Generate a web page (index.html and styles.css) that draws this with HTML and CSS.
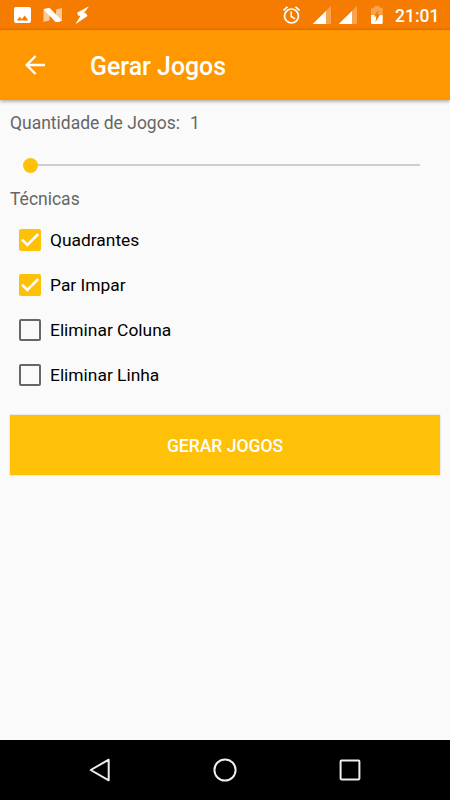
FILE: index.html
```
<!DOCTYPE html>
<html lang="pt-BR">
    <head>
        <meta charset="utf-8">
        <title>Gerar Jogos</title>
        <meta name="viewport" content="width=device-width, initial-scale=1" />
        <link rel="stylesheet" href="styles.css">
    </head>
    <body>
        <div class="screen">

            <div class="status">
                <svg class="status__left" width="100" height="30" viewBox="0 0 100 30">
                    <path fill="#fff" fill-rule="evenodd" d="M16 7h13a2 2 0 0 1 2 2v12a2 2 0 0 1-2 2h-13a2 2 0 0 1-2-2v-12a2 2 0 0 1 2-2zM16.600 20.500h11.800l-3.700-5-2.900 3.700-2-2.500z"/>
                    <path fill="#fff" fill-opacity=".6" d="M43.500 9.500l6-1.500v12.500l-6 1.500zM56 9.500l6-1.500v12.500l-6 1.500z"/>
                    <path fill="#fff" d="M44 9l5.500-1.200 12.300 12.700-2.800 1.500h-3.500l-11.300-12z"/>
                    <path fill="#fff" d="M89 6.200l-12 6.500 1.200 2.800 2.200.5-5 8.200 12.100-8.200-1.300-2.500-2.200-.5z"/>
                </svg>
                <svg class="status__right" width="110" height="30" viewBox="280 0 110 30">
                    <g fill="none" stroke="#fff">
                        <circle cx="291.500" cy="16" r="7" stroke-width="1.700"/>
                        <path stroke-width="1.700" d="M283.500 10.300l4-3.400M299.500 10.300l-4-3.400"/>
                        <path stroke-width="1.500" d="M291.200 11.500v5l3.800 2.300"/>
                    </g>
                    <path fill="#fff" fill-opacity=".3" d="M331 6v18h-5v-13zM357 6v18h-5v-13z"/>
                    <path fill="#fff" d="M326 11v13h-13.300zM352 11v13h-13.300z"/>
                    <path fill="#fff" fill-opacity=".3" d="M371 15v-6q0-1.200 1.200-1.200h2.300v-1.800h5v1.800h2q1.200 0 1.200 1.200v6z"/>
                    <path fill="#fff" d="M371 15h11.700v7.800q0 1.200-1.200 1.200h-9.300q-1.200 0-1.200-1.200z"/>
                    <path fill="#f57c00" d="M378.500 9.500l-4.500 7h2.200l-.7 5.500 4.700-7.500h-2.400z"/>
                </svg>
                <span class="status__clock">21:01</span>
            </div>

            <header class="toolbar">
                <svg class="toolbar__back" width="20" height="20" viewBox="0 0 20 20">
                    <path fill="none" stroke="#fff" stroke-width="2.400" d="M20 10h-18M10.600 1l-9 9 9 9"/>
                </svg>
                <h1 class="toolbar__title">Gerar Jogos</h1>
            </header>

            <main class="content">
                <div class="label">
                    <span>Quantidade de Jogos:</span>
                    <span class="label__value">1</span>
                </div>

                <div class="slider">
                    <div class="slider__thumb"></div>
                    <div class="slider__track"></div>
                </div>

                <div class="label">Técnicas</div>

                <ul class="options">
                    <li class="option">
                        <span class="box box--checked">
                            <svg width="22" height="22" viewBox="0 0 22 22"><path d="M3 10.700l5.300 5.300 11-11"/></svg>
                        </span>
                        Quadrantes
                    </li>
                    <li class="option">
                        <span class="box box--checked">
                            <svg width="22" height="22" viewBox="0 0 22 22"><path d="M3 10.700l5.300 5.300 11-11"/></svg>
                        </span>
                        Par Impar
                    </li>
                    <li class="option"><span class="box"></span>Eliminar Coluna</li>
                    <li class="option"><span class="box"></span>Eliminar Linha</li>
                </ul>

                <button class="button" type="button">GERAR JOGOS</button>
            </main>

            <nav class="navbar">
                <svg width="24" height="26" viewBox="0 0 24 26">
                    <path d="M20.700 2.700v20.600l-18-10.300z"/>
                </svg>
                <svg width="24" height="26" viewBox="0 0 24 26">
                    <circle cx="12" cy="13" r="10.600"/>
                </svg>
                <svg width="24" height="26" viewBox="0 0 24 26">
                    <rect x="2.600" y="3.600" width="18.800" height="18.800" rx=".8"/>
                </svg>
            </nav>

        </div>
    </body>
</html>
```
FILE: styles.css
```
* {
    padding: 0px;
    margin: 0px;
    list-style-type: none;
    box-sizing: border-box;
}

html, body{
    height: 100%;
    font-family: Roboto, sans-serif;
    font-size: 17.5px;
    background-color: #fafafa;
}

svg{
    display: block;
}

.screen{
    display: flex;
    flex-direction: column;
    height: 100vh;
    overflow: hidden;
}

.status{
    display: flex;
    align-items: center;
    height: 30px;
    padding-right: 10px;
    background: #f57c00;
    color: #fff;
}

.status__right{
    margin-left: auto;
}

.status__clock{
    width: 45px;
    margin-left: 5px;
    line-height: 30px;
    padding-top: 1px;
    font-weight: 500;
}

.toolbar{
    display: flex;
    align-items: center;
    height: 70px;
    padding-left: 25px;
    background: #ff9800;
    color: #fff;
    box-shadow: 0 1px 4px rgba(0, 0, 0, .4);
}

.toolbar__title{
    margin-left: 45px;
    padding-top: 2px;
    font-size: 24.9px;
    font-weight: 500;
}

.content{
    flex: 1;
    padding: 11px 10px 0;
}

.label{
    display: flex;
    height: 24px;
    line-height: 24px;
    color: #666;
}

.label__value{
    margin-left: 10px;
}

.slider{
    display: flex;
    align-items: center;
    height: 40px;
    margin: 10px 20px 2px 12.5px;
}

.slider__thumb{
    width: 15px;
    height: 15px;
    border-radius: 50%;
    background: #ffc107;
}

.slider__track{
    flex: 1;
    height: 2px;
    background: #cecece;
}

.options{
    margin-top: 6px;
}

.option{
    display: flex;
    align-items: center;
    height: 45px;
    padding-left: 9px;
    font-size: 17.4px;
    color: #000;
}

.box{
    width: 22px;
    height: 22px;
    margin-right: 9px;
    border: solid 2px #666;
    border-radius: 2px;
}

.box--checked{
    border: 0;
    background: #ffc107;
}

.box path{
    fill: none;
    stroke: #fff;
    stroke-width: 2.5;
}

.button{
    display: block;
    width: 100%;
    height: 60px;
    margin-top: 18px;
    padding-top: 2px;
    border: 0;
    background: #ffc107;
    color: #fff;
    font-family: inherit;
    font-size: 17.5px;
    font-weight: 500;
    box-shadow: 0 0 2px rgba(0, 0, 0, .2);
}

.navbar{
    display: flex;
    justify-content: center;
    align-items: center;
    gap: 101px;
    height: 60px;
    background: #000;
}

.navbar svg{
    fill: none;
    stroke: #eee;
    stroke-width: 2;
    stroke-linejoin: round;
}
```
